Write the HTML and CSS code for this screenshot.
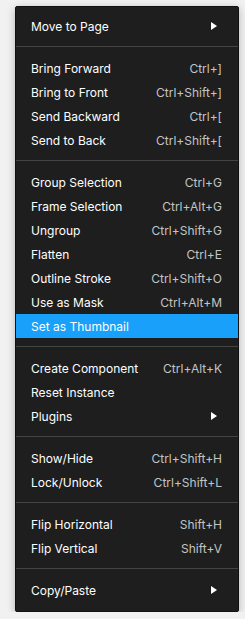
FILE: index.html
```html
<!DOCTYPE html>
<html lang="en">
<head>
  <meta charset="UTF-8">
  <title>Context Menu</title>
  <link rel="stylesheet" href="styles.css">
</head>
<body>
  <div class="menu">
    <div class="item"><span>Move to Page</span><svg class="arrow" width="6" height="8" viewBox="0 0 6 8"><path d="M0 0L6 4L0 8Z" fill="#fff"/></svg></div>
    <div class="sep"></div>
    <div class="item"><span>Bring Forward</span><span class="key">Ctrl+]</span></div>
    <div class="item"><span>Bring to Front</span><span class="key">Ctrl+Shift+]</span></div>
    <div class="item"><span>Send Backward</span><span class="key">Ctrl+[</span></div>
    <div class="item"><span>Send to Back</span><span class="key">Ctrl+Shift+[</span></div>
    <div class="sep"></div>
    <div class="item"><span>Group Selection</span><span class="key">Ctrl+G</span></div>
    <div class="item"><span>Frame Selection</span><span class="key">Ctrl+Alt+G</span></div>
    <div class="item"><span>Ungroup</span><span class="key">Ctrl+Shift+G</span></div>
    <div class="item"><span>Flatten</span><span class="key">Ctrl+E</span></div>
    <div class="item"><span>Outline Stroke</span><span class="key">Ctrl+Shift+O</span></div>
    <div class="item"><span>Use as Mask</span><span class="key">Ctrl+Alt+M</span></div>
    <div class="item active"><span>Set as Thumbnail</span></div>
    <div class="sep"></div>
    <div class="item"><span>Create Component</span><span class="key">Ctrl+Alt+K</span></div>
    <div class="item"><span>Reset Instance</span></div>
    <div class="item"><span>Plugins</span><svg class="arrow" width="6" height="8" viewBox="0 0 6 8"><path d="M0 0L6 4L0 8Z" fill="#fff"/></svg></div>
    <div class="sep"></div>
    <div class="item"><span>Show/Hide</span><span class="key">Ctrl+Shift+H</span></div>
    <div class="item"><span>Lock/Unlock</span><span class="key">Ctrl+Shift+L</span></div>
    <div class="sep"></div>
    <div class="item"><span>Flip Horizontal</span><span class="key">Shift+H</span></div>
    <div class="item"><span>Flip Vertical</span><span class="key">Shift+V</span></div>
    <div class="sep"></div>
    <div class="item"><span>Copy/Paste</span><svg class="arrow" width="6" height="8" viewBox="0 0 6 8"><path d="M0 0L6 4L0 8Z" fill="#fff"/></svg></div>
  </div>
</body>
</html>
```

FILE: styles.css
```css
body {
  margin: 0;
  background: #f1f1f1;
  font-family: Inter, 'Noto Sans', sans-serif;
  font-size: 12px;
}

.menu {
  margin: 6px 0 0 15px;
  width: 224px;
  box-sizing: border-box;
  padding: 7px 0 9px;
  background: #1e1e1e;
  border: 1px solid #111;
  border-radius: 2px;
  box-shadow: 0 2px 8px rgba(0,0,0,0.25);
  color: #fff;
}

.item {
  display: flex;
  justify-content: space-between;
  align-items: center;
  height: 24px;
  padding: 0 16px 0 15px;
}

.item.active {
  background: #18a0fb;
}

.key {
  color: #c4c4c4;
}

.arrow {
  margin-right: 5px;
}

.sep {
  height: 1px;
  background: #444;
  margin: 8px 0 9px;
}
```
